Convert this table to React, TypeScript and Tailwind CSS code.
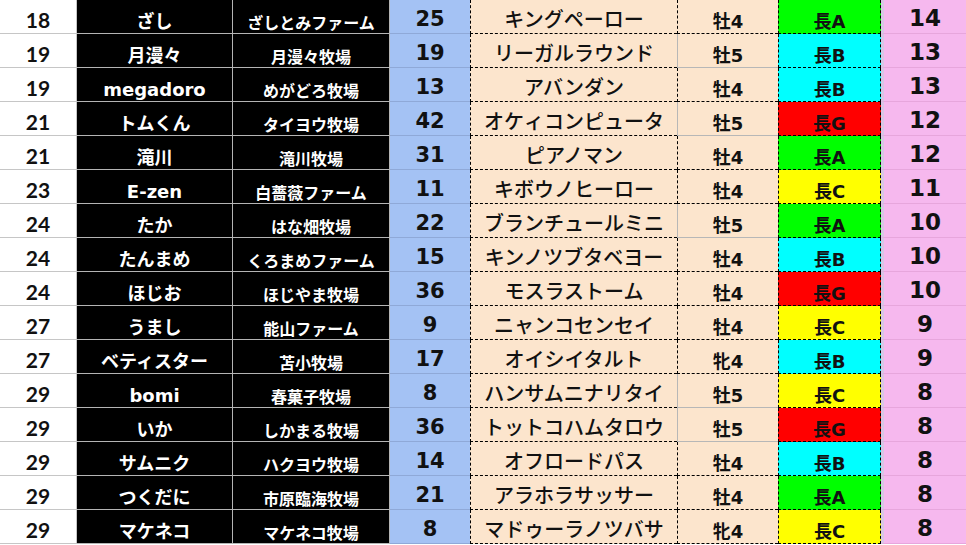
import React from 'react';

type Row = {
  rank: number;
  owner: string;
  farm: string;
  pts: number;
  horse: string;
  sex: string;
  apt: 'A' | 'B' | 'C' | 'G';
  score: number;
};

const rows: Row[] = [
  { rank: 18, owner: 'ざし', farm: 'ざしとみファーム', pts: 25, horse: 'キングペーロー', sex: '牡4', apt: 'A', score: 14 },
  { rank: 19, owner: '月漫々', farm: '月漫々牧場', pts: 19, horse: 'リーガルラウンド', sex: '牡5', apt: 'B', score: 13 },
  { rank: 19, owner: 'megadoro', farm: 'めがどろ牧場', pts: 13, horse: 'アバンダン', sex: '牡4', apt: 'B', score: 13 },
  { rank: 21, owner: 'トムくん', farm: 'タイヨウ牧場', pts: 42, horse: 'オケィコンピュータ', sex: '牡5', apt: 'G', score: 12 },
  { rank: 21, owner: '滝川', farm: '滝川牧場', pts: 31, horse: 'ピアノマン', sex: '牡4', apt: 'A', score: 12 },
  { rank: 23, owner: 'E-zen', farm: '白薔薇ファーム', pts: 11, horse: 'キボウノヒーロー', sex: '牡4', apt: 'C', score: 11 },
  { rank: 24, owner: 'たか', farm: 'はな畑牧場', pts: 22, horse: 'ブランチュールミニ', sex: '牡5', apt: 'A', score: 10 },
  { rank: 24, owner: 'たんまめ', farm: 'くろまめファーム', pts: 15, horse: 'キンノツブタベヨー', sex: '牡4', apt: 'B', score: 10 },
  { rank: 24, owner: 'ほじお', farm: 'ほじやま牧場', pts: 36, horse: 'モスラストーム', sex: '牡4', apt: 'G', score: 10 },
  { rank: 27, owner: 'うまし', farm: '能山ファーム', pts: 9, horse: 'ニャンコセンセイ', sex: '牡4', apt: 'C', score: 9 },
  { rank: 27, owner: 'ベティスター', farm: '苫小牧場', pts: 17, horse: 'オイシイタルト', sex: '牝4', apt: 'B', score: 9 },
  { rank: 29, owner: 'bomi', farm: '春菓子牧場', pts: 8, horse: 'ハンサムニナリタイ', sex: '牡5', apt: 'C', score: 8 },
  { rank: 29, owner: 'いか', farm: 'しかまる牧場', pts: 36, horse: 'トットコハムタロウ', sex: '牡5', apt: 'G', score: 8 },
  { rank: 29, owner: 'サムニク', farm: 'ハクヨウ牧場', pts: 14, horse: 'オフロードパス', sex: '牡4', apt: 'B', score: 8 },
  { rank: 29, owner: 'つくだに', farm: '市原臨海牧場', pts: 21, horse: 'アラホラサッサー', sex: '牡4', apt: 'A', score: 8 },
  { rank: 29, owner: 'マケネコ', farm: 'マケネコ牧場', pts: 8, horse: 'マドゥーラノツバサ', sex: '牝4', apt: 'C', score: 8 },
];

const aptBg: Record<Row['apt'], string> = {
  A: 'bg-[#00ff00]',
  B: 'bg-[#00ffff]',
  C: 'bg-[#ffff00]',
  G: 'bg-[#ff0000]',
};

// Meiryo風: 英数字はVerdana系 (DejaVu Sans)、かなと漢字はNoto CJK
const jp = "font-['DejaVu_Sans','Noto_Sans_CJK_JP',sans-serif]";

export default function App() {
  return (
    <div className={`w-[966px] h-[545px] overflow-hidden bg-white leading-none ${jp}`}>
      {rows.map((r, i) => (
        <div key={i} className="flex h-[34px]">
          {/* 順位 */}
          <div className="w-[77px] flex justify-center pt-[9px] border-r border-b border-[#c6c6c6] bg-white font-['Lato',sans-serif] text-[21px] font-bold text-[#111]">
            {r.rank}
          </div>
          {/* オーナー */}
          <div className="w-[156px] flex justify-center pt-[13px] border-r border-b border-[#b4b4b4] bg-black text-[18px] font-bold text-white whitespace-nowrap">
            {r.owner}
          </div>
          {/* 牧場 */}
          <div className="w-[157px] flex justify-center pt-[16px] border-r border-b border-[#b4b4b4] bg-black text-[16px] font-bold text-white whitespace-nowrap">
            {r.farm}
          </div>
          {/* ポイント */}
          <div className="w-[80px] flex justify-center pt-[9px] border-b border-[#8fa9d8] bg-[#a4c2f4] text-[21px] font-bold text-[#111]">
            {r.pts}
          </div>
          {/* 馬名 */}
          <div className="w-[207px] flex justify-center pt-[10px] border-l border-b border-dashed border-black bg-[#fce5cd] text-[20px] font-medium text-[#111] whitespace-nowrap">
            {r.horse}
          </div>
          {/* 性齢 */}
          <div
            className={`w-[101px] flex justify-center pt-[13px] border-l border-b bg-[#fce5cd] text-[18px] font-bold text-[#111] ${
              r.sex === '牡5' ? 'border-solid border-[#b7b7b7]' : 'border-dashed border-black'
            }`}
          >
            {r.sex}
          </div>
          {/* 距離 */}
          <div
            className={`w-[103px] flex justify-center pt-[13px] border-l border-r border-b border-dashed border-black text-[18px] font-bold text-[#111] ${aptBg[r.apt]}`}
          >
            長{r.apt}
          </div>
          {/* 合計 */}
          <div className="flex-1 flex justify-center pt-[7px] border-l-[3px] border-b border-l-[#d9c6e6] border-b-[#e7a6dc] bg-[#f6b8ee] text-[23px] font-bold text-[#111]">
            {r.score}
          </div>
        </div>
      ))}
    </div>
  );
}
